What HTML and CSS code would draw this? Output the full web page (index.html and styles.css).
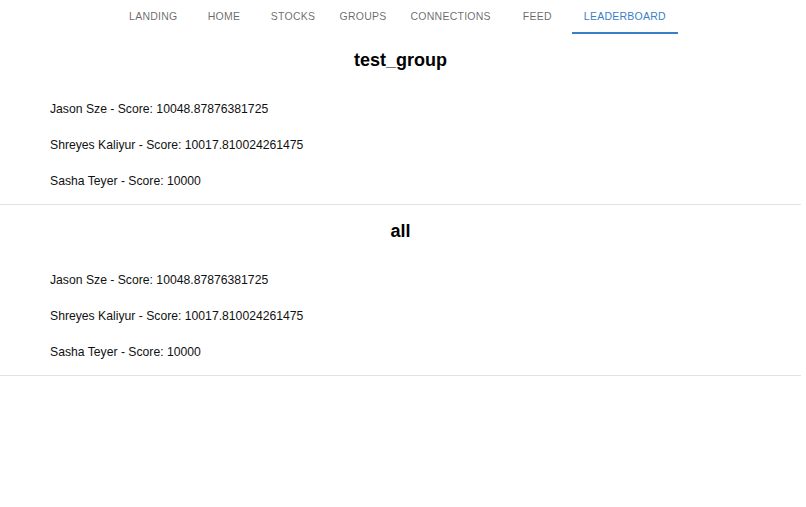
FILE: index.html
```html
<!DOCTYPE html>
<html>
<head>
<meta charset="utf-8">
<link rel="stylesheet" href="styles.css">
</head>
<body>
<div class="page">
  <nav class="tabs">
    <div class="tab">Landing</div>
    <div class="tab">Home</div>
    <div class="tab">Stocks</div>
    <div class="tab">Groups</div>
    <div class="tab">Connections</div>
    <div class="tab">Feed</div>
    <div class="tab active">Leaderboard</div>
  </nav>
  <section class="group">
    <h2 class="title">test_group</h2>
    <ul class="entries">
      <li class="entry">Jason Sze - Score: 10048.87876381725</li>
      <li class="entry">Shreyes Kaliyur - Score: 10017.810024261475</li>
      <li class="entry">Sasha Teyer - Score: 10000</li>
    </ul>
  </section>
  <section class="group">
    <h2 class="title">all</h2>
    <ul class="entries">
      <li class="entry">Jason Sze - Score: 10048.87876381725</li>
      <li class="entry">Shreyes Kaliyur - Score: 10017.810024261475</li>
      <li class="entry">Sasha Teyer - Score: 10000</li>
    </ul>
  </section>
</div>
</body>
</html>
```

FILE: styles.css
```css
html, body {
  margin: 0;
  padding: 0;
  background: #ffffff;
}
body {
  font-family: "Liberation Sans", Arial, Helvetica, sans-serif;
  color: #111111;
}
.page {
  width: 801px;
}
.tabs {
  display: flex;
  justify-content: center;
  height: 34px;
  padding-right: 6px;
}
.tab {
  box-sizing: border-box;
  min-width: 69px;
  height: 34px;
  padding: 0 12px;
  display: flex;
  align-items: center;
  justify-content: center;
  font-size: 10.5px;
  letter-spacing: 0.25px;
  text-transform: uppercase;
  color: rgba(0, 0, 0, 0.6);
  border-bottom: 2px solid transparent;
}
.tab.active {
  color: #3b7fc9;
  border-bottom-color: #3b7fc9;
}
.group {
  border-bottom: 1px solid #e2e2e2;
}
.title {
  margin: 15px 0;
  font-size: 18px;
  line-height: 22px;
  font-weight: bold;
  text-align: center;
  color: #000;
}
.entries {
  list-style: none;
  margin: 0;
  padding: 5px 0 5px 50px;
}
.entry {
  height: 36px;
  line-height: 36px;
  font-size: 12.2px;
  color: #111;
}
```
